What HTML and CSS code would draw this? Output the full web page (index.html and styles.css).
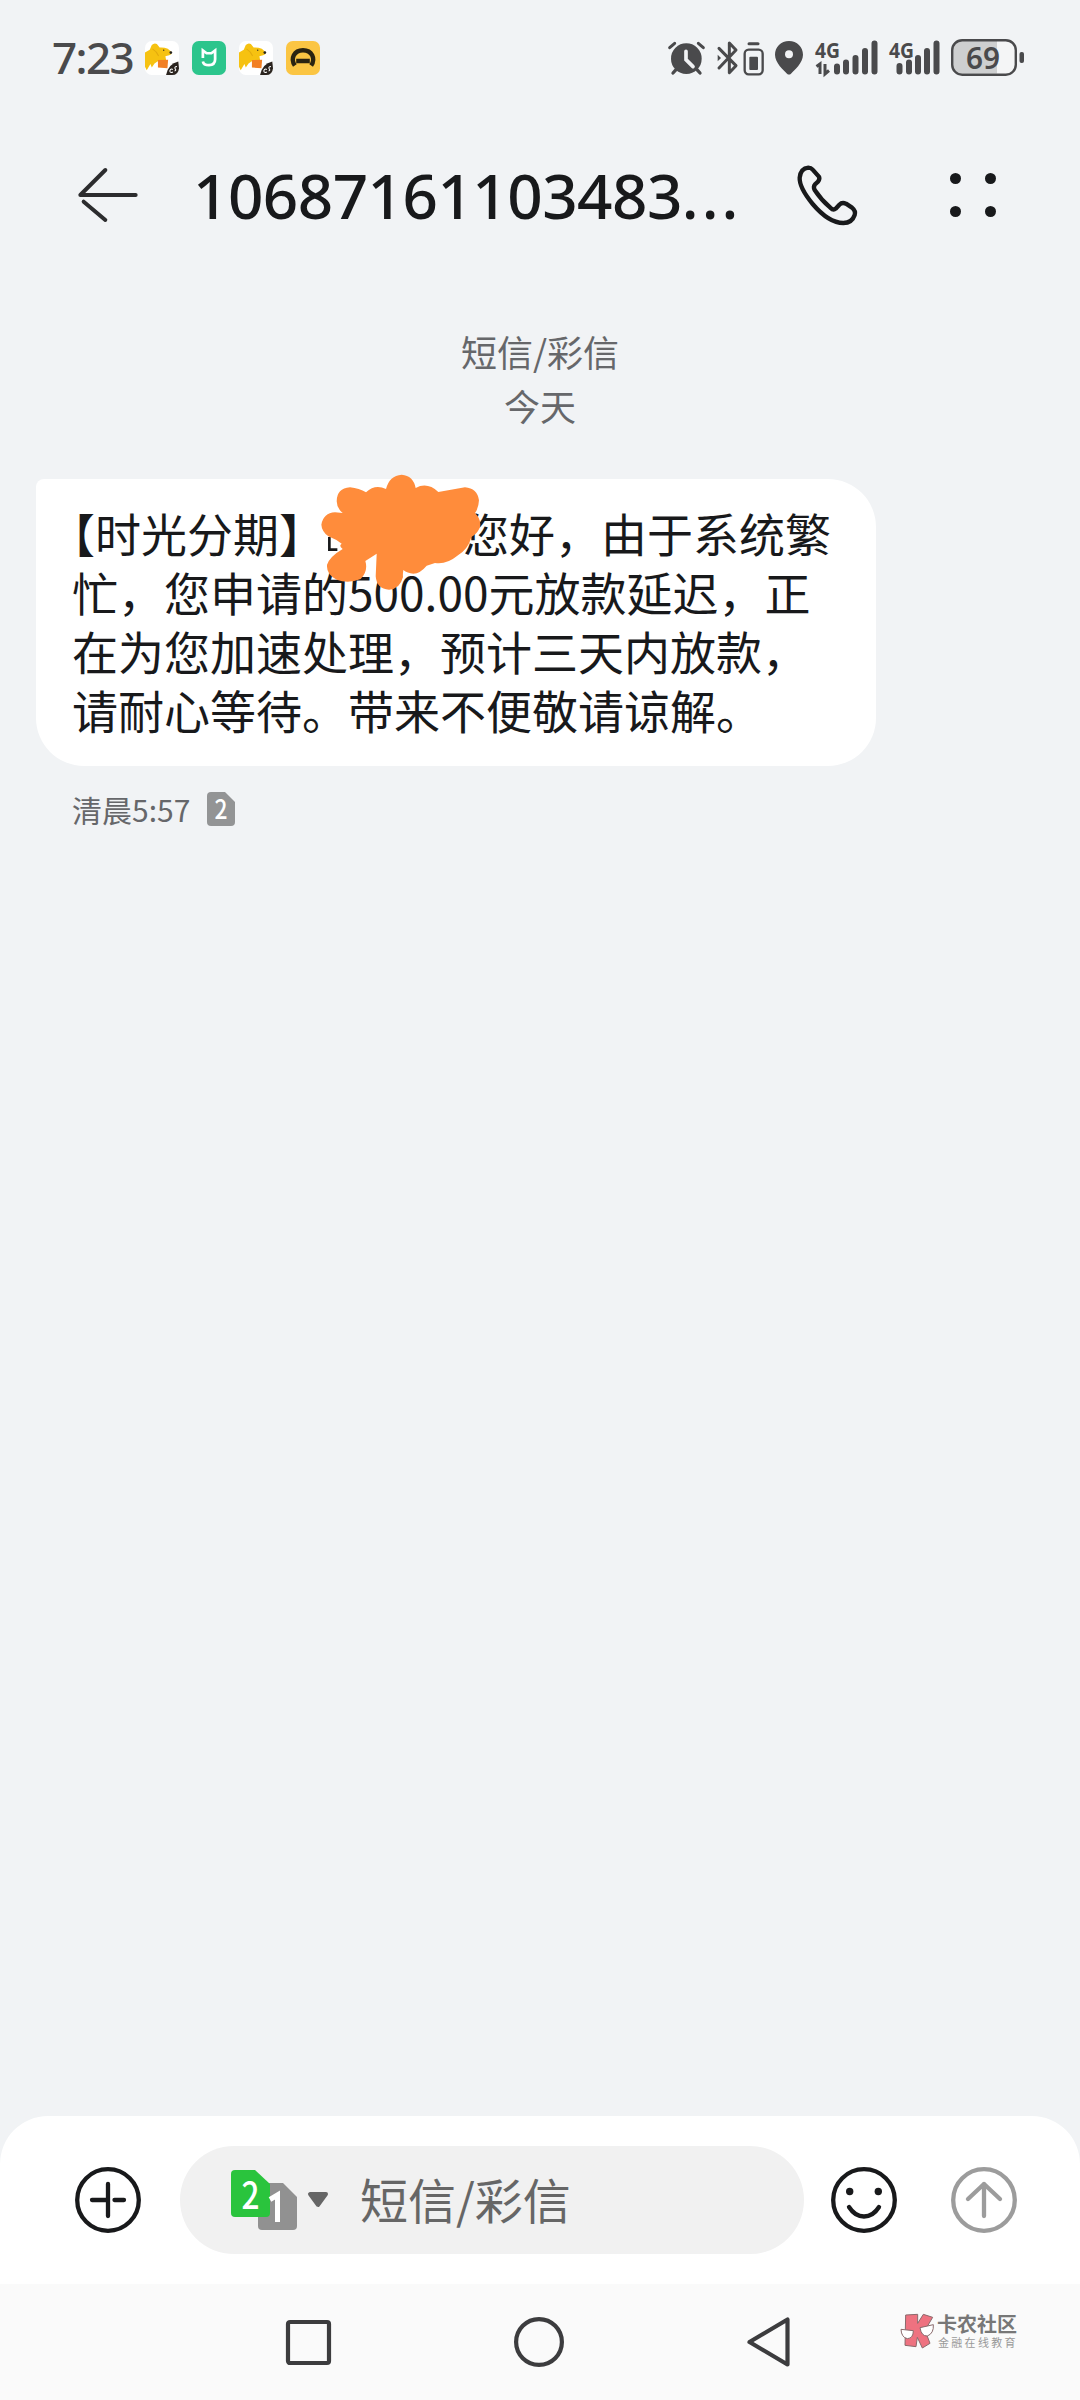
FILE: index.html
```html
<!DOCTYPE html>
<html lang="zh-CN">
<head>
<meta charset="utf-8">
<title>短信</title>
<link rel="stylesheet" href="styles.css">
</head>
<body>
<svg class="defs" width="0" height="0">
  <symbol id="dog" viewBox="0 0 100 100">
    <rect width="100" height="100" rx="20" fill="#fff"/>
    <path d="M0 34 14 26 20 12Q27 5 35 9L43 19Q56 18 67 23L79 33Q79 40 71 42L60 45 62 56 40 58 28 66 20 78 16 68 5 86 0 76Z" fill="#f6c211"/>
    <path d="M22 23Q34 30 40 44" fill="none" stroke="#e3ab0e" stroke-width="3"/>
    <path d="M38 56 68 55 66 80 38 78Z" fill="#f28024"/>
    <circle cx="55" cy="27" r="2" fill="#222"/><circle cx="76" cy="34" r="4" fill="#222"/>
    <path d="M62 100Q68 67 98 60L100 80Q98 100 80 100Z" fill="#2b241f"/>
    <path d="M82 84Q75 80 73 88Q74 95 82 91M94 75Q85 76 89 82Q93 86 87 88" fill="none" stroke="#fff" stroke-width="3"/>
  </symbol>
</svg>
<div class="phone">
  <div class="status">
    <span class="clock">7:23</span>
    <div class="apps">
      <svg width="34" height="34"><use href="#dog"/></svg>
      <svg width="34" height="34" viewBox="0 0 100 100"><rect width="100" height="100" rx="20" fill="#2cc58c"/><path d="M32 50V28L43 36H57L68 28V54Q68 71 50 71Q34 71 32 60" fill="none" stroke="#fff" stroke-width="8"/></svg>
      <svg width="34" height="34"><use href="#dog"/></svg>
      <svg width="34" height="34" viewBox="0 0 100 100"><rect width="100" height="100" rx="20" fill="#fbc543"/><path d="M26 72C12 52 24 27 50 27S88 52 74 72M30 59H70" fill="none" stroke="#2a2311" stroke-width="13"/></svg>
    </div>
    <div class="signals">
      <svg class="alarm" width="37" height="36" viewBox="0 0 111 108"><g fill="none" stroke="#4a4a4c" stroke-linecap="round"><path d="M5 23 20 10M91 10 106 23" stroke-width="9"/><path d="M24 89 15 99M87 89 96 99" stroke-width="10"/></g><circle cx="55" cy="56" r="46" fill="#4a4a4c"/><path d="M54 34V59L75 80" fill="none" stroke="#f1f2f4" stroke-width="11" stroke-linecap="round"/></svg>
      <svg class="bt" width="50" height="36" viewBox="0 0 150 108"><g fill="none" stroke="#4a4a4c" stroke-width="9" stroke-linejoin="round" stroke-linecap="round"><path d="M12 25 63 77 43 98V9L63 30 12 84"/><rect x="89" y="29" width="54" height="74" rx="12" stroke-width="7"/><path d="M102 11H129"/></g><path d="M8 44 18 54 8 64Z" fill="#4a4a4c"/><rect x="103" y="50" width="26" height="40" rx="3" fill="#4a4a4c"/></svg>
      <svg class="pin" width="28" height="34" viewBox="0 0 84 102"><path d="M42 0C18 0 0 18 0 41C0 66 27 88 36 98Q42 103 48 98C57 88 84 66 84 41C84 18 66 0 42 0Z" fill="#4a4a4c"/><circle cx="42" cy="40" r="12" fill="#f1f2f4"/></svg>
      <svg class="net" width="63" height="36" viewBox="0 0 63 36"><text class="gen" x="0" y="17.500" textLength="25" lengthAdjust="spacingAndGlyphs">4G</text><path d="M1.500 26.500 5 24V34M10 24V34L14 30.500" fill="none" stroke="#4a4a4c" stroke-width="3"/><path d="M22 26.500V31.500M31 22.500V31.500M40.500 18V31.500M50 11V31.500M59.500 3.500V31.500" stroke="#4a4a4c" stroke-width="6" stroke-linecap="round"/></svg>
      <svg class="net2" width="51" height="36" viewBox="0 0 51 36"><text class="gen" x="0" y="17.500" textLength="25" lengthAdjust="spacingAndGlyphs">4G</text><path d="M10.500 26V31.500M20 22.500V31.500M29 18V31.500M38 11V31.500M47.500 3.500V31.500" stroke="#4a4a4c" stroke-width="6" stroke-linecap="round"/></svg>
      <svg class="batt" width="74" height="37" viewBox="0 0 74 37"><rect x="1.200" y="1.200" width="63.600" height="34" rx="9" fill="#f4f5f6"/><path d="M10 2H46V34.500H10Q2 34.500 2 26V10Q2 2 10 2Z" fill="#cecfd0"/><rect x="1.200" y="1.200" width="63.600" height="34.500" rx="10" fill="none" stroke="#4a4a4c" stroke-width="2.400"/><rect x="68.500" y="13" width="4.500" height="11" rx="2" fill="#4a4a4c"/><text class="pct" x="15" y="30" textLength="34" lengthAdjust="spacingAndGlyphs">69</text></svg>
    </div>
  </div>
  <div class="header">
    <svg class="back" width="61" height="56" viewBox="83 81 183 168"><path d="M256 165H90L165 90M100 185 165 240" fill="none" stroke="#2c2c2e" stroke-width="12" stroke-linecap="round" stroke-linejoin="round"/></svg>
    <h1 class="title">10687161103483<span class="dots">...</span></h1>
    <svg class="call" width="65" height="66" viewBox="770 65 195 198"><path d="M807 82Q815 82 820 88L838 108Q843 115 836 124L827 132Q821 139 826 149Q845 178 873 202Q882 211 889 205L900 193Q908 185 920 190L938 202Q950 212 946 224Q938 248 912 248C880 248 848 224 820 191C792 157 780 130 781 112Q784 84 807 82Z" fill="none" stroke="#18191b" stroke-width="13" stroke-linejoin="round"/></svg>
    <svg class="more" width="46" height="44" viewBox="0 0 46 44" fill="#18191b"><circle cx="5.500" cy="5.500" r="5.500"/><circle cx="40.500" cy="5.500" r="5.500"/><circle cx="5.500" cy="38.500" r="5.500"/><circle cx="40.500" cy="38.500" r="5.500"/></svg>
  </div>
  <main class="thread">
    <div class="day"><div>短信/彩信</div><div>今天</div></div>
    <div class="bubble">
      <p class="msg">【时光分期】<span class="hidden-name"></span>您好，由于系统繁<br>忙，您申请的500.00元放款延迟，正<br>在为您加速处理，预计三天内放款，<br>请耐心等待。带来不便敬请谅解。</p>
      <svg class="scribble" width="161.700" height="118.300" viewBox="900 40 485 355"><path d="M928 232V270H952" fill="none" stroke="#18191b" stroke-width="8"/><path d="M950 125Q950 86 990 83Q1018 86 1038 98Q1065 72 1098 88Q1108 48 1145 45Q1180 48 1187 85Q1222 66 1255 97L1335 83Q1372 86 1377 122Q1376 145 1365 160Q1385 180 1380 203Q1370 225 1354 232Q1346 268 1310 290Q1280 315 1245 310L1220 318Q1200 342 1180 342Q1162 341 1150 331Q1148 345 1149 352Q1140 388 1107 390Q1070 388 1067 350L1070 282L1036 304Q1045 335 1022 358Q985 373 950 360Q918 345 921 315Q930 290 968 268Q955 258 965 252Q950 240 925 230Q905 215 904 195Q910 160 945 158L968 160Q950 145 950 125Z" fill="#ff8c3b"/></svg>
    </div>
    <div class="meta"><span>清晨5:57</span><svg width="28" height="34" viewBox="0 0 28 34"><path d="M4 0H18L28 10V30Q28 34 24 34H4Q0 34 0 30V4Q0 0 4 0Z" fill="#939495"/><text class="sim" x="7.500" y="26.500" font-size="27" textLength="13" lengthAdjust="spacingAndGlyphs">2</text></svg></div>
  </main>
  <div class="compose">
    <svg class="round plus" width="66" height="66" viewBox="0 0 66 66"><circle cx="33" cy="33" r="30.800"/><path d="M17 33H33M39.500 33H49M33 17V49"/></svg>
    <div class="field">
      <svg class="sims" width="66" height="60" viewBox="0 0 66 60"><path d="M31 13H52L66 27V56Q66 60 62 60H31Q27 60 27 56V17Q27 13 31 13Z" fill="#919191"/><path d="M4 0H24L39 14V43Q39 47 35 47H4Q0 47 0 43V4Q0 0 4 0Z" fill="#2ac43d"/><text class="sim" x="10.500" y="38.500" font-size="38" textLength="18" lengthAdjust="spacingAndGlyphs">2</text><path d="M39 29.500 46.500 25V52" fill="none" stroke="#fff" stroke-width="5"/></svg>
      <svg class="caret" width="22" height="16" viewBox="0 0 22 16"><path d="M3 2H19L11 13Z" fill="#666" stroke="#666" stroke-width="4" stroke-linejoin="round"/></svg>
      <span class="hint">短信/彩信</span>
    </div>
    <svg class="round smile" width="66" height="66" viewBox="0 0 66 66"><circle cx="33" cy="33" r="30.800"/><path d="M18 40Q24 49.500 33 49.500T48 40"/><circle class="eye" cx="18.700" cy="24.500" r="3.700"/><circle class="eye" cx="47.300" cy="24.500" r="3.700"/></svg>
    <svg class="round send" width="66" height="66" viewBox="0 0 66 66"><circle cx="33" cy="33" r="30.800"/><path d="M33 49V17M17 32 33 17 49 32"/></svg>
  </div>
  <div class="nav">
    <svg class="recent" width="45" height="45" viewBox="0 0 45 45"><rect x="2" y="2" width="41" height="41" rx="2"/></svg>
    <svg class="home" width="50" height="50" viewBox="0 0 50 50"><circle cx="25" cy="25" r="22.900"/></svg>
    <svg class="prev" width="43" height="50" viewBox="0 0 43 50"><path d="M40.500 2.500V47.500L2.500 25Z"/></svg>
    <div class="mark">
      <svg width="34" height="36" viewBox="60 68 102 106"><g stroke="#8a6a6c" stroke-width="3"><path d="M77 73 113 71 113 98 130 71 158 80 135 119 150 158 127 172 112 140 108 168 75 164Z" fill="#ee7280"/><path d="M63 116 100 120Q100 143 82 144Q64 140 63 116ZM120 111 160 102Q162 128 142 136Q124 137 120 111Z" fill="#fff"/></g></svg>
      <div class="mark-text"><b>卡农社区</b><span>金融在线教育</span></div>
    </div>
  </div>
</div>
</body>
</html>
```
FILE: styles.css
```css
* { box-sizing: border-box; margin: 0; padding: 0; }
body { background: #f1f3f5; font-family: "Noto Sans CJK SC", "Noto Sans", sans-serif; color: #18191b; }
svg { display: block; flex: none; overflow: visible; }
.defs { position: absolute; }
.phone { width: 1080px; height: 2400px; display: flex; flex-direction: column; overflow: hidden; }

.status { height: 115px; display: flex; align-items: center; padding: 0 55px 0 52px; }
.clock { width: 93px; font: 500 44px/60px "Noto Sans", sans-serif; letter-spacing: -1.6px; color: #4a4a4c; white-space: nowrap; padding-bottom: 1px; }
.apps { display: flex; gap: 13px; }
.signals { margin-left: auto; display: flex; align-items: center; }
.bt { margin-left: 10px; }
.pin { margin-left: 10px; }
.net { margin-left: 12px; }
.net2 { margin-left: 11px; }
.batt { margin-left: 11px; }
.gen { font: 700 22px "Noto Sans", sans-serif; fill: #4a4a4c; }
.pct { font: 600 31px "Noto Sans", sans-serif; fill: #4a4a4c; }
.sim { font-family: "Noto Sans CJK SC", sans-serif; font-weight: 500; fill: #fff; }

.header { height: 160px; display: flex; align-items: center; padding: 0 84px 0 78px; }
.title { margin-left: 54px; width: 603px; font: 500 62px/84px "Noto Sans", sans-serif; letter-spacing: -0.55px; white-space: nowrap; padding-bottom: 1px; }
.dots { letter-spacing: 3px; }
.more { margin-left: auto; }

.thread { flex: 1; padding-left: 36px; }
.day { margin: 49px 0 0 -36px; font-size: 36px; line-height: 54px; text-align: center; color: #66676a; }
.bubble { position: relative; margin-top: 47px; width: 840px; height: 287px; padding: 24px 36px; background: #fff; border-radius: 8px 48px 48px 48px; }
.msg { font-size: 46px; line-height: 59px; text-indent: -23px; white-space: nowrap; }
.hidden-name { display: inline-block; width: 138px; }
.scribble { position: absolute; left: 284px; top: -6px; }
.meta { display: flex; align-items: center; gap: 17px; margin: 21px 0 0 36px; height: 44px; font-size: 30px; line-height: 40px; color: #66676a; }

.compose { height: 168px; display: flex; align-items: center; padding: 0 63px 0 75px; background: #fff; border-radius: 48px 48px 0 0; }
.round { fill: none; stroke: #18191b; stroke-width: 4.300px; stroke-linecap: round; stroke-linejoin: round; }
.eye { fill: #18191b; stroke: none; }
.send { stroke: #9c9c9c; margin-left: auto; }
.field { margin: 0 27px 0 39px; width: 624px; height: 108px; border-radius: 54px; background: #f1f1f1; display: flex; align-items: center; padding-left: 51px; }
.caret { margin-left: 10px; }
.hint { margin-left: 31px; font-size: 48px; line-height: 70px; color: #666; padding-bottom: 4px; }

.nav { height: 116px; display: flex; align-items: center; padding: 0 63px 0 286px; background: #fafafa; }
.recent, .home, .prev { fill: none; stroke: #3c3c3e; stroke-width: 4.200px; stroke-linejoin: round; }
.home { margin-left: 183px; }
.prev { margin-left: 183px; }
.mark { margin-left: auto; display: flex; gap: 3px; padding-bottom: 22px; }
.mark-text { width: 80px; display: flex; flex-direction: column; white-space: nowrap; }
.mark-text b { font-size: 20px; line-height: 22px; font-weight: 700; color: #777; }
.mark-text span { font-size: 11px; line-height: 14px; letter-spacing: 2.300px; color: #999; padding-left: 1px; }
```
